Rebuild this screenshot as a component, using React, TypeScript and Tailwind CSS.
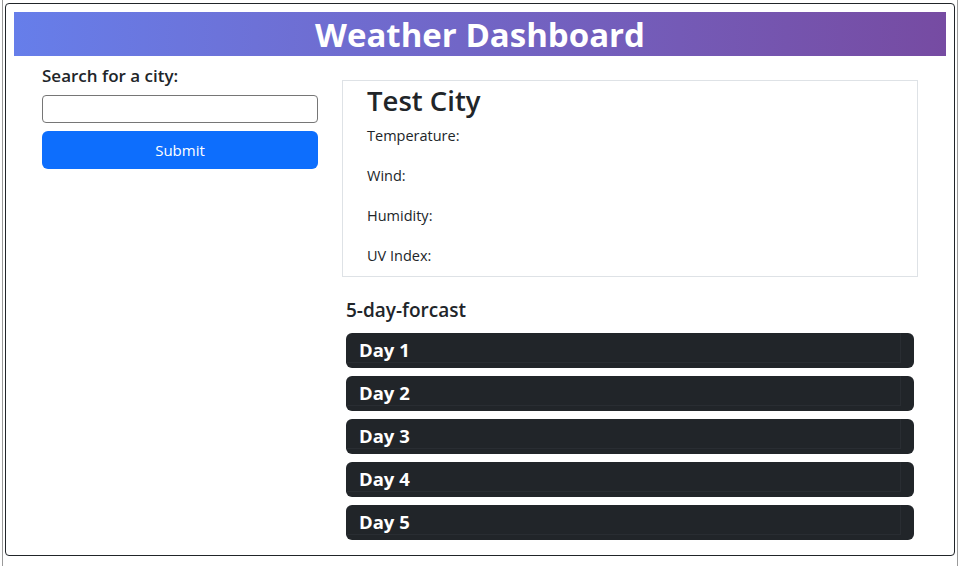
import React from 'react';

const days = ['Day 1', 'Day 2', 'Day 3', 'Day 4', 'Day 5'];
const stats = ['Temperature:', 'Wind:', 'Humidity:', 'UV Index:'];

export default function App() {
  return (
    <div className="h-[566px] w-[960px] overflow-hidden bg-white px-[2px] font-['Open_Sans',sans-serif] text-[#212529]">
      <div className="h-full border-x border-[#9a9a9a] px-[2px] pt-[3px]">
        <div className="h-[553px] rounded border border-[#212529] p-2">
          {/* Header */}
          <div className="flex h-[44px] items-center justify-center bg-gradient-to-r from-[#667eea] to-[#764ba2]">
            <h1 className="text-[33px] font-bold leading-none text-white">Weather Dashboard</h1>
          </div>

          <div className="flex pl-[28px]">
            {/* Search */}
            <div className="w-[276px] pt-[7px]">
              <h5 className="text-[17px] font-semibold leading-[26px]">Search for a city:</h5>
              <input className="mt-[6px] block h-[28px] w-full rounded-sm border border-[#767676]" />
              <button className="mt-[8px] h-[38px] w-full rounded-md bg-[#0d6efd] text-[15px] text-white">
                Submit
              </button>
            </div>

            {/* Current weather + forecast */}
            <div className="ml-[24px] w-[576px] pt-[24px]">
              <div className="border border-[#dee2e6] pb-[8px] pl-[24px] pt-[2px]">
                <h2 className="mb-[5px] text-[27.5px] font-semibold leading-[36px]">Test City</h2>
                {stats.map((s) => (
                  <p key={s} className="mb-4 text-[14.5px] leading-[24px] last:mb-0">
                    {s}
                  </p>
                ))}
              </div>

              <div className="px-[4px] pt-[21px]">
                <h5 className="text-[19px] font-semibold leading-[24px]">5-day-forcast</h5>
                <div className="mt-[11px] flex flex-col gap-[8px]">
                  {days.map((d) => (
                    <div key={d} className="h-[35px] rounded-md bg-[#212529]">
                      <div className="mr-[13px] flex h-[30px] items-center border-b border-r border-[#292d32] pl-[13px] pt-[4px]">
                        <span className="text-[18.5px] font-bold text-white">{d}</span>
                      </div>
                    </div>
                  ))}
                </div>
              </div>
            </div>
          </div>
        </div>
      </div>
    </div>
  );
}
